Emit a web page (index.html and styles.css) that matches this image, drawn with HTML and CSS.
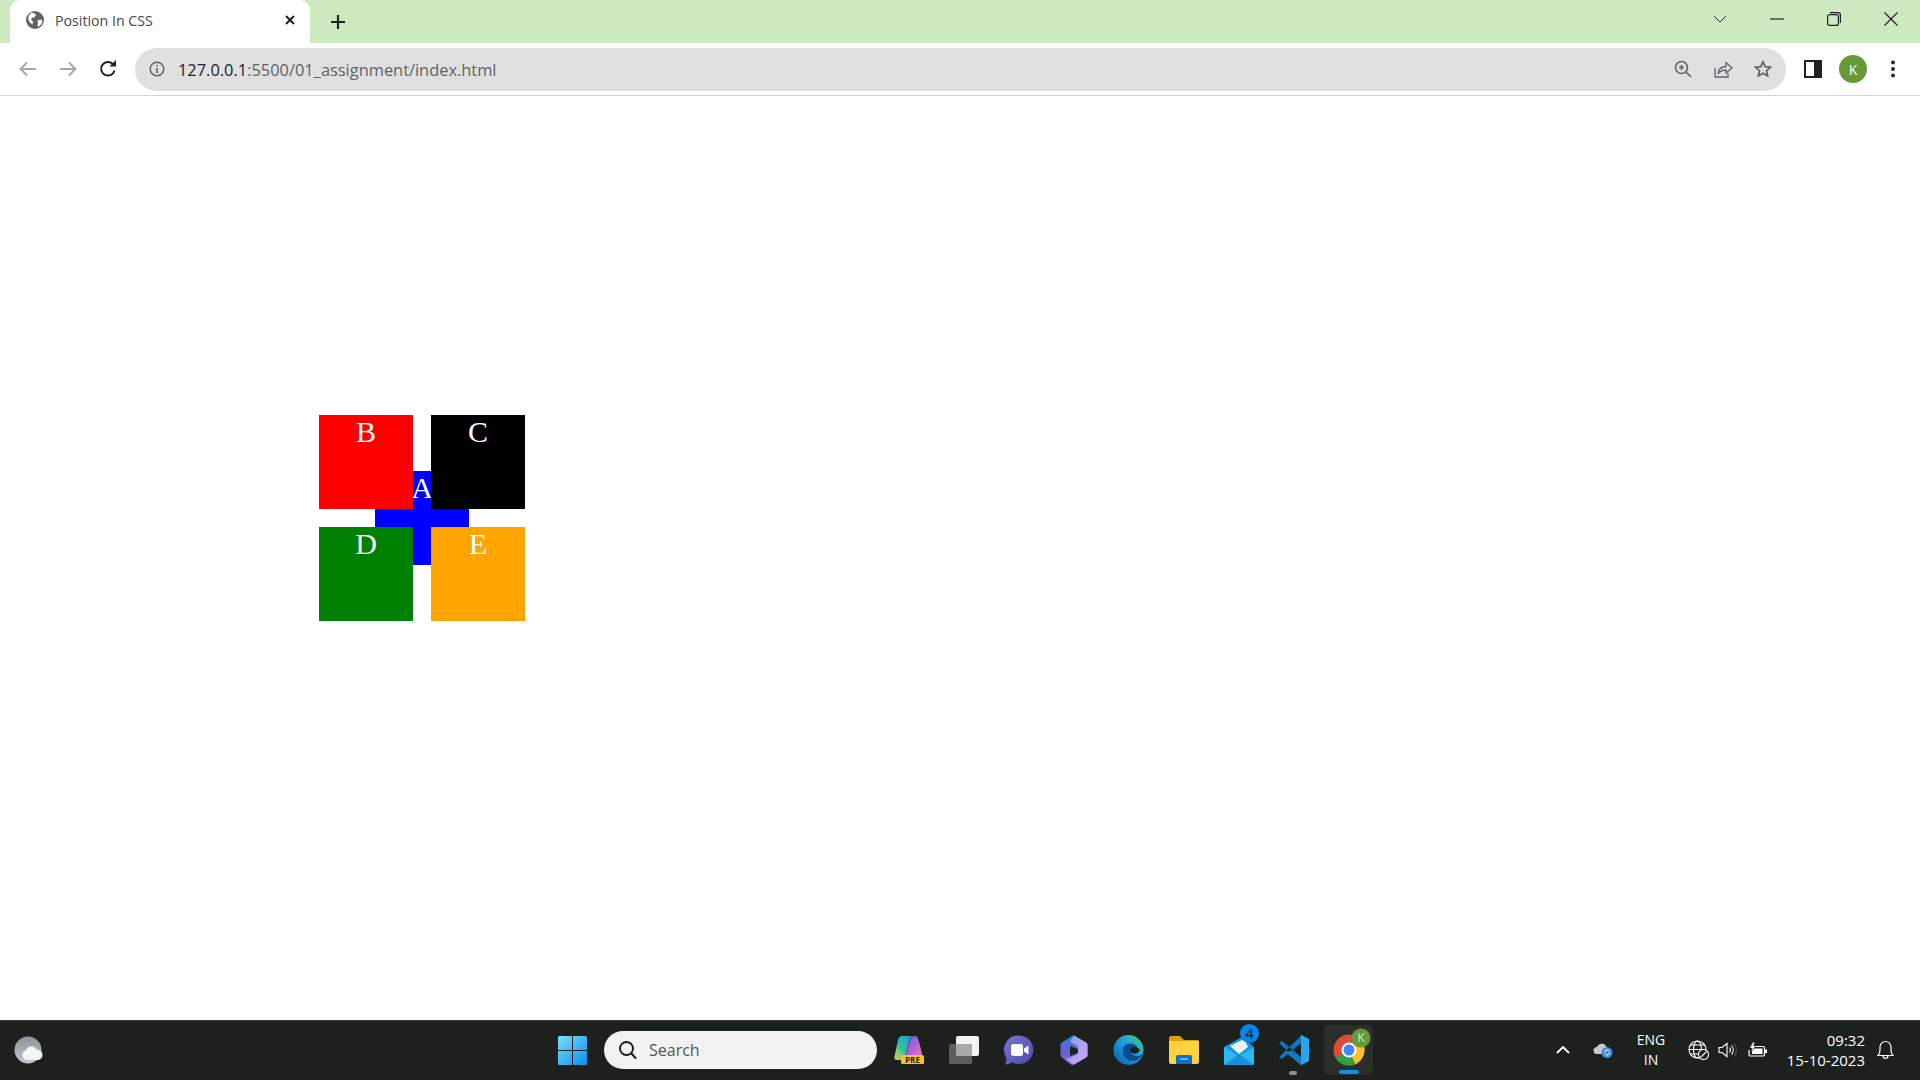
FILE: index.html
```html
<!DOCTYPE html>
<html lang="en">
<head>
  <meta charset="UTF-8">
  <title>Position In CSS</title>
  <link rel="stylesheet" href="styles.css">
</head>
<body>
  <!-- tab strip -->
  <div class="tabstrip">
    <div class="tab">
      <svg class="favicon" width="18" height="18" viewBox="0 0 18 18"><circle cx="9" cy="9" r="9" fill="#5f6368"/><path d="M5 1.800l3.500.4 1.500 1.800-1.500 2.300-2.500.4-1 2 2 1.800-.5 3-2.500-1.800-1.800-3.500.5-3.500zM11.500 9.500l3.500-1 1.500 1.200-1 3.300-2.500 2.500-1.500-.5.500-3z" fill="#fff"/></svg>
      <span class="tab-title">Position In CSS</span>
      <svg class="tab-close" width="12" height="12" viewBox="0 0 12 12"><path d="M2 2l8 8M10 2l-8 8" stroke="#202124" stroke-width="2"/></svg>
    </div>
    <div class="new-tab">
      <svg width="16" height="16" viewBox="0 0 16 16"><path d="M8 1v14M1 8h14" stroke="#202124" stroke-width="2.200"/></svg>
    </div>
    <div class="caption">
      <div class="caption-btn"><svg width="14" height="8" viewBox="0 0 14 8"><path d="M1 1l6 6 6-6" fill="none" stroke="#333" stroke-width="1"/></svg></div>
      <div class="caption-btn"><svg width="14" height="2" viewBox="0 0 14 2"><path d="M0 1h14" stroke="#222" stroke-width="1.200"/></svg></div>
      <div class="caption-btn"><svg width="14" height="14" viewBox="0 0 14 14"><rect x=".6" y="2.600" width="10.800" height="10.800" rx="2" fill="none" stroke="#222" stroke-width="1.200"/><path d="M3 .6h8a2.400 2.400 0 0 1 2.400 2.400v8" fill="none" stroke="#222" stroke-width="1.200"/></svg></div>
      <div class="caption-btn"><svg width="14" height="14" viewBox="0 0 14 14"><path d="M.5.5l13 13M13.500.5l-13 13" stroke="#222" stroke-width="1.200"/></svg></div>
    </div>
  </div>

  <!-- address bar row -->
  <div class="toolbar">
    <div class="tool-btn"><svg width="18" height="16" viewBox="0 0 18 16"><path d="M17 8H2M8 1.500L1.500 8 8 14.500" fill="none" stroke="#a3a5a8" stroke-width="1.800"/></svg></div>
    <div class="tool-btn"><svg width="18" height="16" viewBox="0 0 18 16"><path d="M1 8h15M10 1.500L16.500 8 10 14.500" fill="none" stroke="#a3a5a8" stroke-width="1.800"/></svg></div>
    <div class="tool-btn"><svg width="18" height="18" viewBox="0 0 18 18"><path d="M15.500 10.500A6.800 6.800 0 1 1 13.800 4" fill="none" stroke="#202124" stroke-width="2"/><path d="M10.500 6.500H17V0z" fill="#202124"/></svg></div>
    <div class="omnibox">
      <svg class="info" width="16" height="16" viewBox="0 0 16 16"><circle cx="8" cy="8" r="6.800" fill="none" stroke="#5f6368" stroke-width="1.500"/><path d="M8 7v5M8 4v1.600" stroke="#5f6368" stroke-width="1.600"/></svg>
      <span class="url"><span class="host">127.0.0.1</span>:5500/01_assignment/index.html</span>
      <div class="omni-actions">
        <div class="tool-btn"><svg width="18" height="18" viewBox="0 0 18 18"><circle cx="7.500" cy="7.500" r="6" fill="none" stroke="#5f6368" stroke-width="1.600"/><path d="M12 12l5 5M5 7.500h5M7.500 5v5" stroke="#5f6368" stroke-width="1.600"/></svg></div>
        <div class="tool-btn"><svg width="20" height="18" viewBox="0 0 20 18"><path d="M2 8v9h13v-4" fill="none" stroke="#5f6368" stroke-width="1.300"/><path d="M5 14c.5-5 4-7.500 8-7.500V2.500L19 8l-6 5V10c-3.500 0-6 1-8 4z" fill="none" stroke="#5f6368" stroke-width="1.300"/></svg></div>
        <div class="tool-btn"><svg width="18" height="18" viewBox="0 0 18 18"><path d="M9 1.800l2.200 4.800 5.200.6-3.900 3.500 1.100 5.200L9 13.300l-4.600 2.600 1.100-5.200-3.900-3.500 5.200-.6z" fill="none" stroke="#5f6368" stroke-width="1.700"/></svg></div>
      </div>
    </div>
    <div class="tool-btn"><svg width="18" height="18" viewBox="0 0 18 18"><rect width="18" height="18" fill="#202124"/><rect x="2" y="2" width="8" height="14" fill="#fff"/></svg></div>
    <div class="tool-btn"><span class="avatar">K</span></div>
    <div class="tool-btn"><svg width="4" height="18" viewBox="0 0 4 18"><circle cx="2" cy="2.500" r="1.900" fill="#202124"/><circle cx="2" cy="9" r="1.900" fill="#202124"/><circle cx="2" cy="15.500" r="1.900" fill="#202124"/></svg></div>
  </div>

  <!-- the page itself -->
  <main class="page">
    <div class="boxes">
      <div class="box box-a">A</div>
      <div class="box box-b">B</div>
      <div class="box box-c">C</div>
      <div class="box box-d">D</div>
      <div class="box box-e">E</div>
    </div>
  </main>

  <!-- windows taskbar -->
  <footer class="taskbar">
    <svg class="weather" width="29" height="28" viewBox="0 0 29 28">
      <defs><linearGradient id="wg" x1="0" y1="0" x2="0" y2="1"><stop offset="0" stop-color="#8d949c"/><stop offset="1" stop-color="#c2c6cb"/></linearGradient></defs>
      <circle cx="14" cy="14" r="13.500" fill="url(#wg)"/>
      <path d="M13 24a5 5 0 0 1-1-9.800 6 6 0 0 1 11-.2 5 5 0 0 1 1 10z" fill="#f4f5f6"/>
    </svg>
    <svg class="start" width="29" height="29" viewBox="0 0 29 29">
      <defs><linearGradient id="sg" x1="0" y1="0" x2="1" y2="1"><stop offset="0" stop-color="#7fdcff"/><stop offset="1" stop-color="#0a8ff0"/></linearGradient></defs>
      <path d="M0 1.500A1.500 1.500 0 0 1 1.500 0H14v14H0zM15 0h12.500A1.500 1.500 0 0 1 29 1.500V14H15zM0 15h14v14H1.500A1.500 1.500 0 0 1 0 27.500zM15 15h14v12.500a1.500 1.500 0 0 1-1.500 1.500H15z" fill="url(#sg)"/>
    </svg>
    <div class="search">
      <svg width="20" height="20" viewBox="0 0 20 20"><circle cx="8.500" cy="8.500" r="6.500" fill="none" stroke="#1c1c1c" stroke-width="1.900"/><path d="M13 13l5 5.500" stroke="#1c1c1c" stroke-width="2"/></svg>
      <span>Search</span>
    </div>
    <div class="apps">
      <div class="app">
        <svg width="30" height="30" viewBox="0 0 30 30">
          <defs>
            <linearGradient id="cp" x1="0" y1="1" x2="1" y2="0"><stop offset="0" stop-color="#e8d13a"/><stop offset=".45" stop-color="#2fc0a0"/><stop offset="1" stop-color="#2a8fe0"/></linearGradient>
            <linearGradient id="cq" x1="0" y1="0" x2="1" y2="1"><stop offset="0" stop-color="#3a7be0"/><stop offset=".5" stop-color="#b45ad8"/><stop offset="1" stop-color="#f07ab0"/></linearGradient>
          </defs>
          <path d="M16 5c1.500-3 2.500-4 5-4l2 .5 2 5 3 12c0 2-2 3-4 3H11z" fill="url(#cq)"/>
          <path d="M8 1h12c-2 0-3.500 1.500-4.500 4L11 21c-1 3-3 4-5 4H3c-2 0-3-1.500-2.500-3.500L4 5c.8-2.500 2-4 4-4z" fill="url(#cp)"/>
          <rect x="7" y="20" width="23" height="9" rx="1.500" fill="#fcc419"/>
          <text x="18.500" y="27.500" class="pre">PRE</text>
        </svg>
      </div>
      <div class="app">
        <svg width="30" height="28" viewBox="0 0 30 28"><rect x="0" y="8" width="23" height="20" rx="2" fill="#5e5e5e"/><rect x="7" y="0" width="23" height="20" rx="2" fill="#f2f2f2"/><rect x="7" y="8" width="16" height="12" fill="#a9a9a9"/></svg>
      </div>
      <div class="app">
        <svg width="30" height="30" viewBox="0 0 30 30"><defs><linearGradient id="ch" x1="0" y1="0" x2="1" y2="1"><stop offset="0" stop-color="#7a74d6"/><stop offset="1" stop-color="#4d4aa8"/></linearGradient></defs><path d="M15 .5a14.300 14.300 0 1 1-7 26.800C6 29 3 29.500 .5 29.500c1.500-1.500 2-3.500 1.800-7A14.300 14.300 0 0 1 15 .5z" fill="url(#ch)"/><rect x="7" y="9" width="12" height="12" rx="2.500" fill="#fff"/><path d="M20 13.500l4.500-3v9l-4.500-3z" fill="#fff"/></svg>
      </div>
      <div class="app">
        <svg width="28" height="30" viewBox="0 0 28 30">
          <defs>
            <linearGradient id="m3" x1="0" y1="0" x2="0" y2="1"><stop offset="0" stop-color="#2f7fd8"/><stop offset=".6" stop-color="#6a5fd0"/><stop offset="1" stop-color="#a070e0"/></linearGradient>
            <linearGradient id="m4" x1="0" y1="0" x2="1" y2="1"><stop offset="0" stop-color="#7f9fe8"/><stop offset="1" stop-color="#d2a6f4"/></linearGradient>
          </defs>
          <path d="M12 1l2-.5 12 7c1 .6 1.500 1.500 1.500 2.500v10c0 1-.5 2-1.500 2.500l-12 7c-1 .6-2 .6-3 0L2 22.500C1 22 .5 21 .5 20V10C.5 9 1 8 2 7.500z" fill="url(#m3)"/>
          <path d="M14 .5l12 7c1 .6 1.500 1.500 1.500 2.500v10c0 1-.5 2-1.500 2.500l-12 7-8-5 11-5 1-8-8-5z" fill="url(#m4)"/>
          <path d="M10 11l8 3v4l-8 3z" fill="#1d211e"/>
        </svg>
      </div>
      <div class="app">
        <svg width="31" height="30" viewBox="0 0 31 30"><defs><linearGradient id="ed" x1="0" y1="1" x2="1" y2="0"><stop offset="0" stop-color="#0c59a4"/><stop offset=".55" stop-color="#1b9de2"/><stop offset="1" stop-color="#4fd36b"/></linearGradient></defs><circle cx="15.500" cy="15" r="15" fill="url(#ed)"/><path d="M31 17c-1 3-6 5-10 3.500-4-1.500-4-5-2-7 1.500-1.500 4-1.500 6 0-2-5-9-6.500-13-3-3 3-3 9 1 13 3 2.500 7 3 10 2 4-2 7-5 8-8.500z" fill="#0d4c8c"/><path d="M18 13c3-2 7-1 9 2-1 3-5 5-8 3-2-1-2.500-3.500-1-5z" fill="#1d211e"/></svg>
      </div>
      <div class="app">
        <svg width="30" height="28" viewBox="0 0 30 28"><path d="M0 2a2 2 0 0 1 2-2h9l4 4h13a2 2 0 0 1 2 2v3H0z" fill="#d9a013"/><path d="M0 5h30v21a2 2 0 0 1-2 2H2a2 2 0 0 1-2-2z" fill="#fdd23f"/><path d="M7 21a2 2 0 0 1 2-2h12a2 2 0 0 1 2 2v7H7z" fill="#0c72c4"/><path d="M11 23h8" stroke="#7cc5f5" stroke-width="1.500"/></svg>
      </div>
      <div class="app">
        <svg width="30" height="30" viewBox="0 0 30 30"><path d="M0 12L18 2l12 10v18H0z" fill="#1496e0"/><path d="M6 11l14-7 4 8-9 7z" fill="#f2f2f2"/><path d="M0 12l15 9 15-9v18H0z" fill="#2cb8f0"/><path d="M0 30l15-11 15 11z" fill="#1a8fdc"/></svg>
        <span class="badge">4</span>
      </div>
      <div class="app app-open">
        <svg width="30" height="30" viewBox="0 0 30 30"><path d="M21.800 0L30 4v22l-8.200 4L8 18l14-11z" fill="#1a8ad4"/><path d="M21.800 0L30 4v22l-8.200 4z" fill="#2aa5ea"/><path d="M22 7L11 15l11 8z" fill="#1d211e"/><path d="M0 8l3-2 19 16v7zM0 22l3 2L22 8V1z" fill="#0f76c4"/></svg>
        <i class="dot"></i>
      </div>
      <div class="app app-active">
        <svg class="chrome" width="44" height="44" viewBox="0 0 44 44">
          <circle cx="22" cy="22" r="15.500" fill="#e04a3a"/>
          <path d="M22 22L35.400 14.200a15.500 15.500 0 0 1-7.200 22z" fill="#fbc02d"/>
          <path d="M22 22l6.200 14.200A15.500 15.500 0 0 1 8.600 29.700z" fill="#2f9e44"/>
          <circle cx="22" cy="22" r="6.500" fill="#4285f4" stroke="#fff" stroke-width="2"/>
          <circle cx="34" cy="10" r="9.500" fill="#659a35"/>
          <text x="34" y="14" class="k">K</text>
        </svg>
        <i class="bar"></i>
      </div>
    </div>
    <div class="tray">
      <div class="tray-item chevron"><svg width="14" height="8" viewBox="0 0 14 8"><path d="M1 7l6-6 6 6" fill="none" stroke="#fff" stroke-width="1.800"/></svg></div>
      <div class="tray-item chevron"><svg width="20" height="16" viewBox="0 0 20 16"><path d="M4 12a3.500 3.500 0 0 1 0-7 5 5 0 0 1 9-1 4 4 0 0 1 1 3L9 12z" fill="#c9c9c9"/><circle cx="14" cy="10.500" r="5.500" fill="#3a8fdc"/><path d="M11.500 10.500a2.500 2.500 0 0 1 4.500-1.500M16.500 10.500a2.500 2.500 0 0 1-4.500 1.500" fill="none" stroke="#fff" stroke-width="1"/></svg></div>
      <div class="lang">ENG<br>IN</div>
      <div class="tray-item globe"><svg width="21" height="20" viewBox="0 0 21 20"><g fill="none" stroke="#fff" stroke-width="1.100"><circle cx="9.500" cy="9.500" r="8.500"/><ellipse cx="9.500" cy="9.500" rx="4" ry="8.500"/><path d="M1 9.500h17M2.500 5h14M2.500 14h14"/></g><circle cx="15.500" cy="14.500" r="5" fill="#1a1c1b" stroke="#fff" stroke-width="1.100"/><path d="M12.500 17.500l6-6" stroke="#fff" stroke-width="1.100"/></svg></div>
      <div class="tray-item speaker"><svg width="20" height="16" viewBox="0 0 20 16"><path d="M1 5.500h3L9 1.500v13l-5-4H1z" fill="none" stroke="#fff" stroke-width="1.100"/><path d="M11.500 5.500a4 4 0 0 1 0 5M13.500 3.500a7 7 0 0 1 0 9" fill="none" stroke="#fff" stroke-width="1.100"/><path d="M16 1.500a10 10 0 0 1 0 13" fill="none" stroke="#555" stroke-width="1.100"/></svg></div>
      <div class="tray-item battery"><svg width="20" height="16" viewBox="0 0 20 16"><path d="M7 4.500h8a1.500 1.500 0 0 1 1.500 1.500v6.500a1.500 1.500 0 0 1-1.500 1.500H2.500A1.500 1.500 0 0 1 1 12.500V8" fill="none" stroke="#fff" stroke-width="1.200"/><rect x="4" y="6.500" width="10.500" height="5.500" fill="#fff"/><rect x="17" y="7.500" width="2" height="3.500" fill="#fff"/><path d="M5 0L1.500 6H4L3 10l5-6.500H5.500L7 0z" fill="#fff" stroke="#1a1c1b" stroke-width=".6"/></svg></div>
      <div class="clock">09:32<br>15-10-2023</div>
      <div class="tray-item bell"><svg width="17" height="20" viewBox="0 0 17 20"><path d="M1 15.500c1.500-1.500 2-3 2-5.500V7a5.500 5.500 0 0 1 11 0v3c0 2.500.5 4 2 5.500zM6 15.500a2.500 3 0 0 0 5 0" fill="none" stroke="#fff" stroke-width="1.200"/></svg></div>
    </div>
  </footer>
</body>
</html>
```

FILE: styles.css
```css
* {
  box-sizing: border-box;
}
html, body {
  height: 100%;
}
body {
  margin: 0;
  height: 1080px;
  overflow: hidden;
  display: flex;
  flex-direction: column;
  font-family: "Open Sans", sans-serif;
  background: #fff;
}

/* tab strip */
.tabstrip {
  height: 43px;
  background: #cce9bf;
  display: flex;
  align-items: stretch;
  flex: none;
}
.tab {
  width: 300px;
  margin-left: 10px;
  background: #fff;
  border-radius: 10px 10px 0 0;
  display: flex;
  align-items: center;
  padding: 0 14px 3px 16px;
  gap: 11px;
}
.tab-title {
  flex: 1;
  font-size: 14.200px;
  color: #45474a;
}
.new-tab {
  width: 24px;
  margin-left: 16px;
  display: flex;
  align-items: center;
  justify-content: center;
}
.caption {
  margin-left: auto;
  margin-right: 1px;
  display: flex;
}
.caption-btn {
  width: 57px;
  display: flex;
  align-items: center;
  justify-content: center;
  padding-bottom: 6px;
}

/* toolbar */
.toolbar {
  height: 53px;
  flex: none;
  background: #fff;
  border-bottom: 1px solid #d3d3d3;
  display: flex;
  align-items: center;
  padding: 0 7px 0 8px;
}
.tool-btn {
  width: 40px;
  height: 40px;
  flex: none;
  display: flex;
  align-items: center;
  justify-content: center;
}
.omnibox {
  flex: 1;
  height: 43px;
  margin: 0 7px 0 7px;
  background: #e0e0e0;
  border-radius: 22px;
  display: flex;
  align-items: center;
  padding: 0 3px 0 14px;
}
.info {
  flex: none;
}
.url {
  margin-left: 13px;
  flex: 1;
  font-size: 16.400px;
  color: #5f6368;
}
.host {
  color: #202124;
}
.omni-actions {
  display: flex;
}
.avatar {
  width: 28px;
  height: 28px;
  border-radius: 50%;
  background: #659a35;
  color: #fff;
  font-size: 14px;
  display: flex;
  align-items: center;
  justify-content: center;
}

/* page content */
.page {
  flex: 1;
  padding: 319px 0 0 319px;
  font-family: "Liberation Serif", serif;
}
.boxes {
  position: relative;
  width: 206px;
  display: grid;
  grid-template-columns: 94px 94px;
  grid-auto-rows: 94px;
  gap: 18px;
}
.box {
  color: #fff;
  font-size: 30px;
  text-align: center;
}
.box-a {
  position: absolute;
  left: 56px;
  top: 56px;
  width: 94px;
  height: 94px;
  background: #00f;
}
.box-b {
  position: relative;
  background: #f00;
}
.box-c {
  position: relative;
  background: #000;
}
.box-d {
  position: relative;
  background: #008000;
}
.box-e {
  position: relative;
  background: #ffa500;
}

/* taskbar */
.taskbar {
  height: 60px;
  flex: none;
  background: #1d211e;
  border-top: 1px solid #3a3d3b;
  display: flex;
  align-items: center;
  padding: 0 0 1px 14px;
  color: #fff;
}
.weather {
  flex: none;
}
.start {
  flex: none;
  margin-left: 515px;
}
.search {
  width: 273px;
  height: 38px;
  margin-left: 17px;
  border-radius: 19px;
  background: #f2f2f2;
  display: flex;
  align-items: center;
  padding-left: 14px;
  gap: 11px;
  color: #555;
  font-size: 16px;
  flex: none;
}
.apps {
  display: flex;
  margin-left: 4px;
}
.app {
  position: relative;
  width: 55px;
  height: 50px;
  display: flex;
  align-items: center;
  justify-content: center;
}
.pre {
  font: bold 8px "Open Sans", sans-serif;
  fill: #222;
  text-anchor: middle;
}
.k {
  font: 12px "Open Sans", sans-serif;
  fill: #d8e6c8;
  text-anchor: middle;
}
.badge {
  position: absolute;
  right: 7px;
  top: -1px;
  width: 19px;
  height: 19px;
  border-radius: 50%;
  background: #0a84ea;
  color: #111;
  font-size: 15px;
  line-height: 19px;
  text-align: center;
}
.dot {
  position: absolute;
  left: 23px;
  bottom: 0;
  width: 8px;
  height: 4px;
  border-radius: 2px;
  background: #8f8f8f;
}
.app-active {
  background: #2b2f2c;
  border-radius: 5px;
  width: 49px;
  margin-left: 3px;
}
.chrome {
  flex: none;
}
.bar {
  position: absolute;
  left: 15px;
  bottom: 1px;
  width: 20px;
  height: 4px;
  border-radius: 2px;
  background: #0a8ff0;
}
.tray {
  margin-left: auto;
  padding-right: 15px;
  display: flex;
  align-items: center;
  font-size: 14px;
  line-height: 20px;
}
.tray-item {
  display: flex;
  align-items: center;
  justify-content: center;
}
.chevron {
  width: 40px;
}
.lang {
  width: 56px;
  text-align: center;
}
.globe {
  width: 38px;
}
.speaker {
  width: 22px;
}
.battery {
  width: 38px;
}
.clock {
  width: 88px;
  text-align: right;
  font-size: 15px;
}
.bell {
  width: 40px;
}
```
